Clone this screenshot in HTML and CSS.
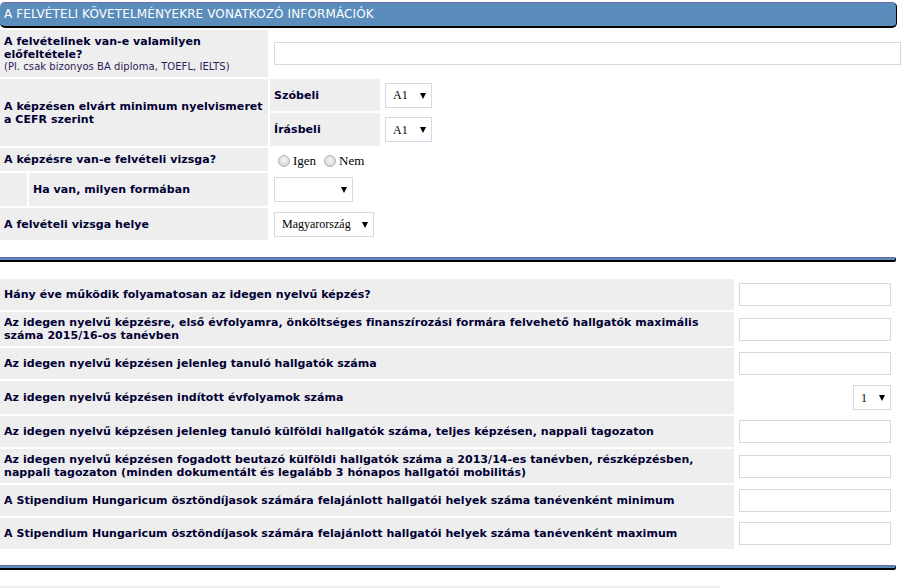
FILE: index.html
```html
<!DOCTYPE html>
<html lang="hu">
<head>
<meta charset="utf-8">
<title>Felvételi követelmények</title>
<link rel="stylesheet" href="styles.css">
</head>
<body>
<div class="page">
  <div class="section-head">A FELVÉTELI KÖVETELMÉNYEKRE VONATKOZÓ INFORMÁCIÓK</div>

  <div class="form-top">
    <div class="lbl span2 r1">
      <div>A felvételinek van-e valamilyen előfeltétele?
        <div class="note">(Pl. csak bizonyos BA diploma, TOEFL, IELTS)</div>
      </div>
    </div>
    <div class="val span2b"><input class="txt wide" type="text"></div>

    <div class="lbl span2 rows2">A képzésen elvárt minimum nyelvismeret a CEFR szerint</div>
    <div class="lbl sub h32">Szóbeli</div>
    <div class="val"><span class="sel sel-a1"><select><option>A1</option></select></span></div>
    <div class="lbl sub h33">Írásbeli</div>
    <div class="val"><span class="sel sel-a1"><select><option>A1</option></select></span></div>

    <div class="lbl span2 h23">A képzésre van-e felvételi vizsga?</div>
    <div class="val span2b radios">
      <label class="radio"><input type="radio" name="vizsga"> Igen</label>
      <label class="radio"><input type="radio" name="vizsga"> Nem</label>
    </div>

    <div class="lbl blank h33"></div>
    <div class="lbl indent">Ha van, milyen formában</div>
    <div class="val span2b"><span class="sel sel-forma"><select><option></option></select></span></div>

    <div class="lbl span2 h32">A felvételi vizsga helye</div>
    <div class="val span2b"><span class="sel sel-hely"><select><option>Magyarország</option></select></span></div>
  </div>

  <div class="sep sep1"></div>

  <div class="form-bottom">
    <div class="lbl">Hány éve működik folyamatosan az idegen nyelvű képzés?</div>
    <div class="val2"><input class="txt short" type="text"></div>

    <div class="lbl">Az idegen nyelvű képzésre, első évfolyamra, önköltséges finanszírozási formára felvehető hallgatók maximális száma 2015/16-os tanévben</div>
    <div class="val2"><input class="txt short" type="text"></div>

    <div class="lbl">Az idegen nyelvű képzésen jelenleg tanuló hallgatók száma</div>
    <div class="val2"><input class="txt short" type="text"></div>

    <div class="lbl">Az idegen nyelvű képzésen indított évfolyamok száma</div>
    <div class="val2 right"><span class="sel sel-num"><select><option>1</option></select></span></div>

    <div class="lbl">Az idegen nyelvű képzésen jelenleg tanuló külföldi hallgatók száma, teljes képzésen, nappali tagozaton</div>
    <div class="val2"><input class="txt short" type="text"></div>

    <div class="lbl">Az idegen nyelvű képzésen fogadott beutazó külföldi hallgatók száma a 2013/14-es tanévben, részképzésben, nappali tagozaton (minden dokumentált és legalább 3 hónapos hallgatói mobilitás)</div>
    <div class="val2"><input class="txt short" type="text"></div>

    <div class="lbl">A Stipendium Hungaricum ösztöndíjasok számára felajánlott hallgatói helyek száma tanévenként minimum</div>
    <div class="val2"><input class="txt short" type="text"></div>

    <div class="lbl">A Stipendium Hungaricum ösztöndíjasok számára felajánlott hallgatói helyek száma tanévenként maximum</div>
    <div class="val2"><input class="txt short" type="text"></div>
  </div>

  <div class="sep sep2"></div>

  <div class="next-row"></div>
</div>
</body>
</html>
```

FILE: styles.css
```css
html, body {
  margin: 0;
  padding: 0;
  background: #ffffff;
}

body {
  font-family: "DejaVu Sans", Verdana, sans-serif;
  font-size: 11px;
  color: #000033;
  overflow: hidden;
}

.page {
  padding-top: 2px;
  width: 907px;
}

.section-head {
  width: 892px;
  height: 23px;
  box-sizing: content-box;
  background: #5a8dbc;
  color: #ffffff;
  font-size: 12px;
  letter-spacing: 0.12px;
  line-height: 23px;
  padding-left: 4px;
  border-top: 1px solid #6f6aa8;
  border-right: 1px solid #000;
  border-bottom: 2px solid #000;
  border-radius: 5px;
}

/* top form */
.form-top {
  margin-top: 2px;
  display: grid;
  grid-template-columns: 27px 239px 110px 1fr;
  gap: 2px;
}

.lbl {
  background: #eeeeee;
  font-weight: bold;
  line-height: 13px;
  padding: 0 4px;
  display: flex;
  align-items: center;
  letter-spacing: 0.05px;
}

.span2 { grid-column: 1 / span 2; }
.span2b { grid-column: 3 / span 2; }
.rows2 { grid-row: span 2; }

.r1 { height: 47px; }
.h23 { height: 23px; }
.h32 { height: 32px; }
.h33 { height: 33px; }

.note {
  font-weight: normal;
  font-size: 10px;
  line-height: 12px;
  color: #2e1a57;
}

.sub { padding-left: 4px; }
.indent { padding-left: 4px; }
.blank { padding: 0; }

.val {
  display: flex;
  align-items: center;
  padding-left: 4px;
}

.txt {
  box-sizing: border-box;
  height: 23px;
  border: 1px solid #d9d6e6;
  background: #fff;
  margin: 0;
  padding: 2px 4px;
  font-size: 12px;
}

.wide { width: 627px; }
.short { width: 152px; }

/* custom select */
.sel {
  position: relative;
  display: inline-block;
}

.sel select {
  appearance: none;
  -webkit-appearance: none;
  box-sizing: border-box;
  height: 25px;
  border: 1px solid #d9d6e6;
  background: #fff;
  font-family: "Liberation Serif", "Times New Roman", serif;
  font-size: 12px;
  color: #000;
  padding: 0 0 0 7px;
  margin: 0;
  border-radius: 0;
  outline: none;
}

.sel::after {
  content: "";
  position: absolute;
  right: 6px;
  top: 10px;
  border-left: 3.5px solid transparent;
  border-right: 3.5px solid transparent;
  border-top: 6px solid #000;
  pointer-events: none;
}

.sel-a1 { margin-left: -1px; }
.sel-a1 select { width: 47px; }
.sel-forma select { width: 79px; }
.sel-hely select { width: 100px; padding-left: 7px; }
.sel-num select { width: 38px; padding-left: 7px; }

/* radios */
.radios {
  gap: 8px;
  padding-left: 8px;
  font-family: "Liberation Serif", "Times New Roman", serif;
  font-size: 13px;
  color: #000;
  padding-top: 3px;
}

.radio {
  display: inline-flex;
  align-items: center;
  gap: 2px;
}

.radio input {
  appearance: none;
  -webkit-appearance: none;
  width: 12px;
  height: 12px;
  margin: 0 1px 0 0;
  border-radius: 50%;
  border: 1px solid #b3b3b3;
  background: radial-gradient(circle at 50% 40%, #f4f4f4 0%, #dedede 60%, #c9c9c9 100%);
  box-sizing: border-box;
}

/* separator */
.sep {
  width: 895px;
  height: 2px;
  background: #5a8dbc;
  border-top: 1px solid #6566a6;
  border-bottom: 2px solid #000;
  border-right: 1px solid #000;
  border-radius: 0 2px 2px 0;
}

.sep1 { margin-top: 17px; }
.sep2 { margin-top: 16px; }

/* bottom form */
.form-bottom {
  margin-top: 17px;
  display: grid;
  grid-template-columns: 734px 157px;
  column-gap: 2px;
  row-gap: 2px;
}

.form-bottom .lbl {
  padding: 4px 4px;
}

.val2 {
  display: flex;
  align-items: center;
  padding: 4px 0 4px 3px;
}

.val2 .txt { height: 23px; }

.val2.right {
  justify-content: flex-end;
  padding-right: 2px;
}

.next-row {
  margin-top: 16px;
  width: 720px;
  height: 10px;
  background: #eeeeee;
}
```
